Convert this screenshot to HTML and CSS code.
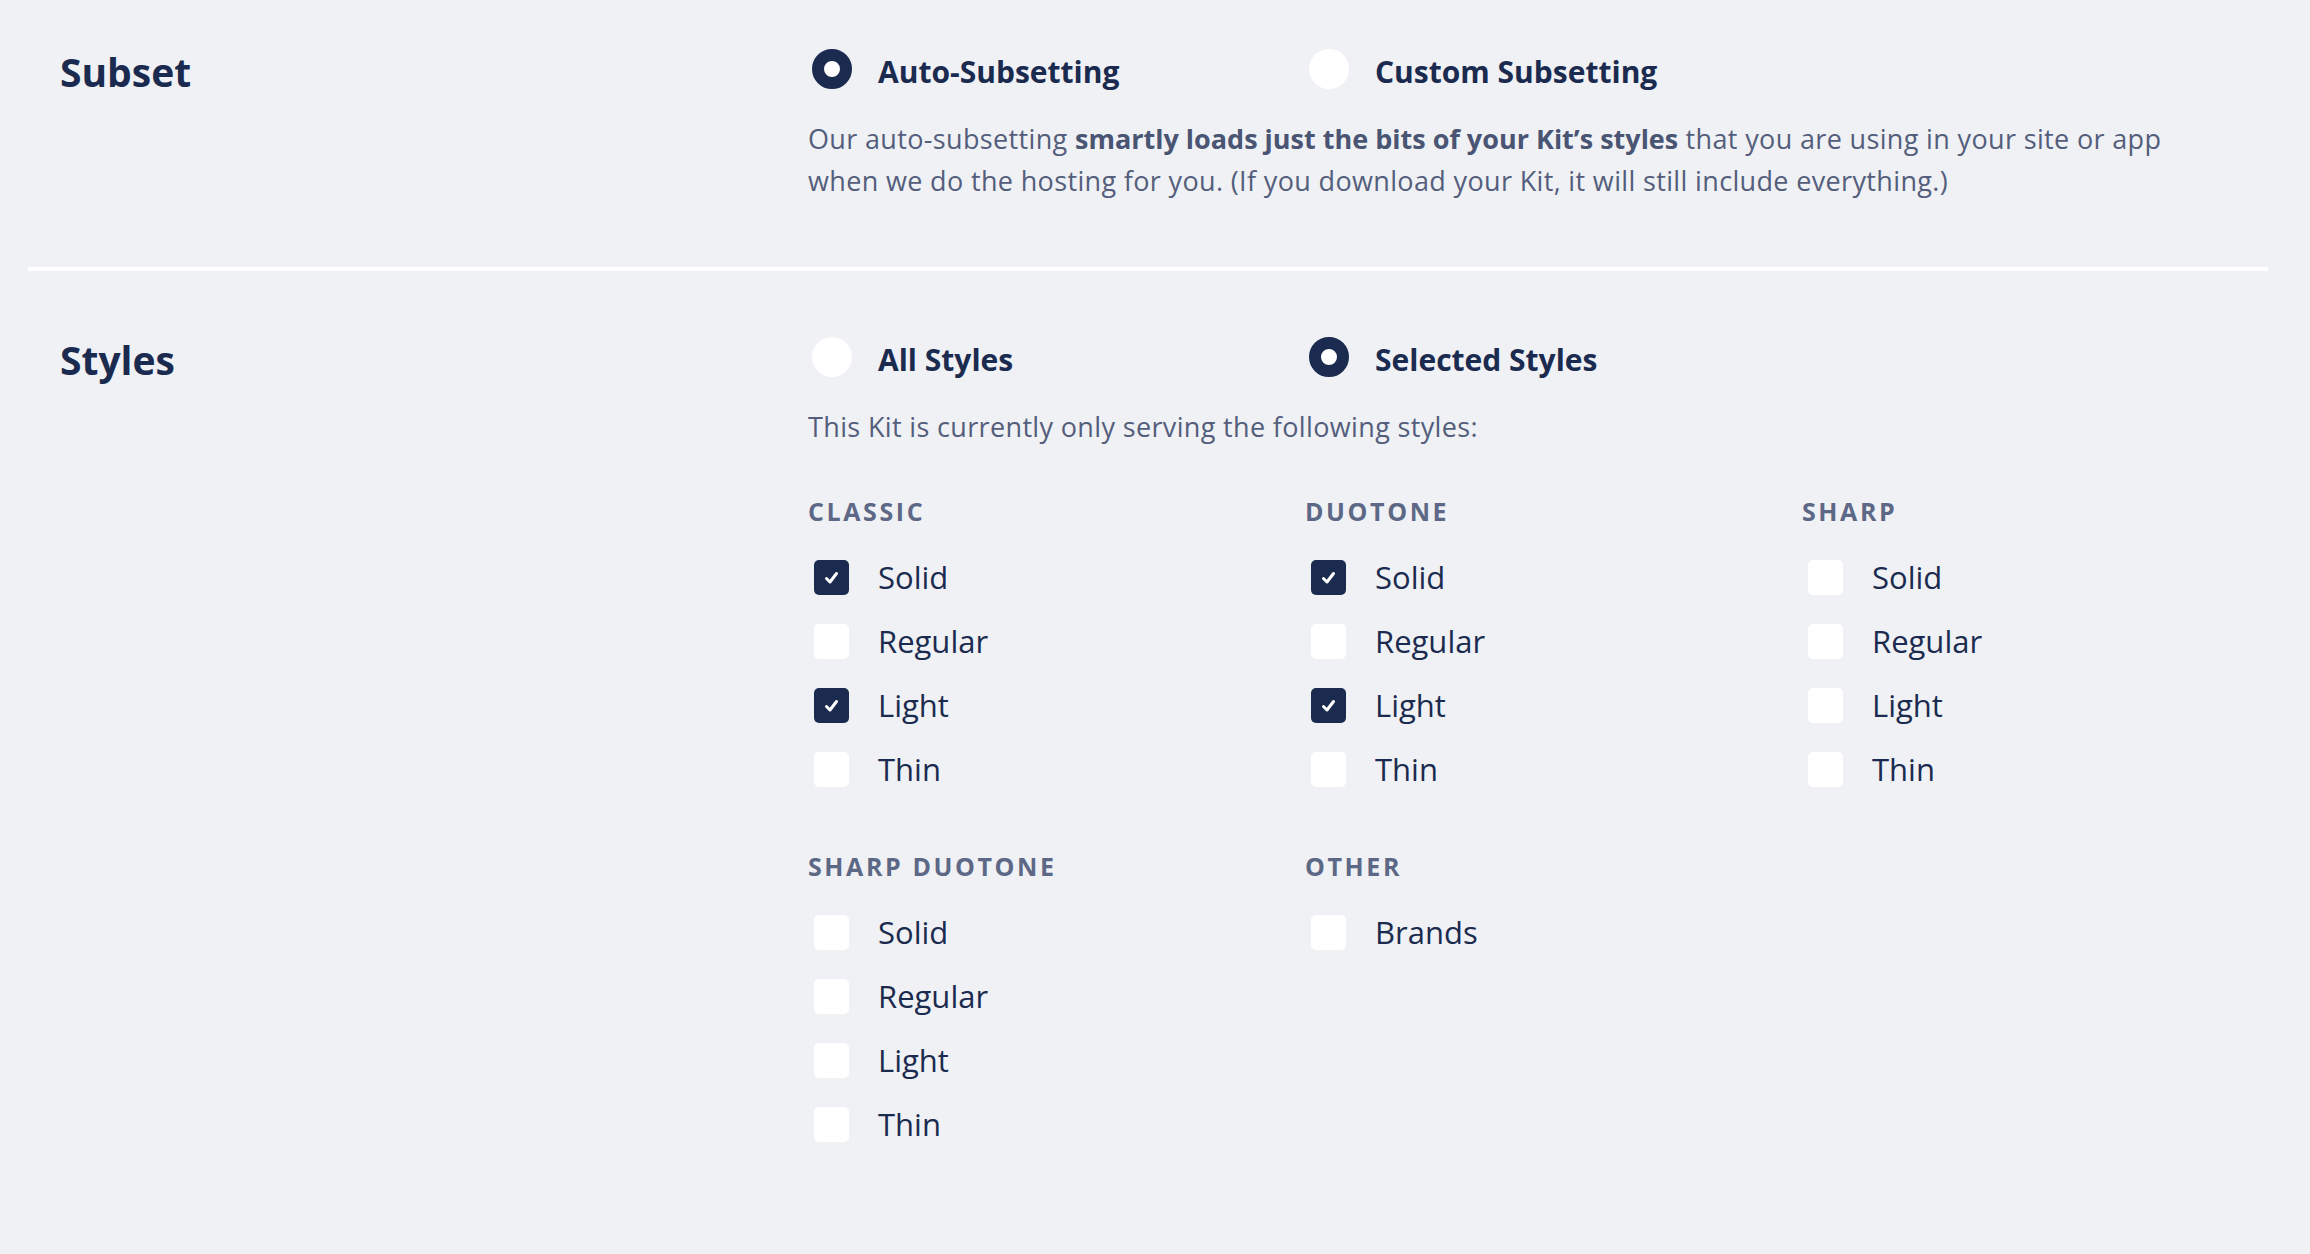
FILE: index.html
```html
<!DOCTYPE html>
<html lang="en">
<head>
<meta charset="utf-8">
<title>Kit Settings</title>
<link rel="stylesheet" href="styles.css">
</head>
<body>
<main class="page">
  <section class="row">
    <h2 class="row-title">Subset</h2>
    <div class="row-body">
      <div class="choices">
        <label class="choice"><span class="radio on"></span><span class="choice-label">Auto-Subsetting</span></label>
        <label class="choice"><span class="radio"></span><span class="choice-label">Custom Subsetting</span></label>
      </div>
      <p class="desc wide">Our auto-subsetting <strong>smartly loads just the bits of your Kit’s styles</strong> that you are using in your site or app when we do the hosting for you. (If you download your Kit, it will still include everything.)</p>
    </div>
  </section>

  <hr class="divider">

  <section class="row">
    <h2 class="row-title">Styles</h2>
    <div class="row-body">
      <div class="choices">
        <label class="choice"><span class="radio"></span><span class="choice-label">All Styles</span></label>
        <label class="choice"><span class="radio on"></span><span class="choice-label">Selected Styles</span></label>
      </div>
      <p class="desc">This Kit is currently only serving the following styles:</p>

      <div class="groups">
        <div class="group">
          <h3 class="group-title">Classic</h3>
          <ul class="checks">
            <li class="check"><span class="box on"><svg viewBox="0 0 35 35"><polyline points="12.5,18.5 16,22 22.5,13.5"/></svg></span><span class="check-label">Solid</span></li>
            <li class="check"><span class="box"></span><span class="check-label">Regular</span></li>
            <li class="check"><span class="box on"><svg viewBox="0 0 35 35"><polyline points="12.5,18.5 16,22 22.5,13.5"/></svg></span><span class="check-label">Light</span></li>
            <li class="check"><span class="box"></span><span class="check-label">Thin</span></li>
          </ul>
        </div>
        <div class="group">
          <h3 class="group-title">Duotone</h3>
          <ul class="checks">
            <li class="check"><span class="box on"><svg viewBox="0 0 35 35"><polyline points="12.5,18.5 16,22 22.5,13.5"/></svg></span><span class="check-label">Solid</span></li>
            <li class="check"><span class="box"></span><span class="check-label">Regular</span></li>
            <li class="check"><span class="box on"><svg viewBox="0 0 35 35"><polyline points="12.5,18.5 16,22 22.5,13.5"/></svg></span><span class="check-label">Light</span></li>
            <li class="check"><span class="box"></span><span class="check-label">Thin</span></li>
          </ul>
        </div>
        <div class="group">
          <h3 class="group-title">Sharp</h3>
          <ul class="checks">
            <li class="check"><span class="box"></span><span class="check-label">Solid</span></li>
            <li class="check"><span class="box"></span><span class="check-label">Regular</span></li>
            <li class="check"><span class="box"></span><span class="check-label">Light</span></li>
            <li class="check"><span class="box"></span><span class="check-label">Thin</span></li>
          </ul>
        </div>
        <div class="group">
          <h3 class="group-title">Sharp Duotone</h3>
          <ul class="checks">
            <li class="check"><span class="box"></span><span class="check-label">Solid</span></li>
            <li class="check"><span class="box"></span><span class="check-label">Regular</span></li>
            <li class="check"><span class="box"></span><span class="check-label">Light</span></li>
            <li class="check"><span class="box"></span><span class="check-label">Thin</span></li>
          </ul>
        </div>
        <div class="group">
          <h3 class="group-title">Other</h3>
          <ul class="checks">
            <li class="check"><span class="box"></span><span class="check-label">Brands</span></li>
          </ul>
        </div>
      </div>
    </div>
  </section>
</main>
</body>
</html>
```

FILE: styles.css
```css
* { box-sizing: border-box; }

html, body {
  margin: 0;
  padding: 0;
  background: #eff1f4;
}

body {
  font-family: "Open Sans", "Lato", sans-serif;
  color: #183153;
}

.page {
  padding: 49px 42px 0 28px;
}

.row {
  display: grid;
  grid-template-columns: 748px 1fr;
  padding: 0 32px;
}

.row-title {
  margin: 3px 0 0;
  font-size: 39px;
  line-height: 40px;
  font-weight: 700;
  color: #1b2b4f;
}

.row-body {
  display: flex;
  flex-direction: column;
}

.choices {
  display: grid;
  grid-template-columns: 497px 497px;
}

.choice {
  display: flex;
  align-items: flex-start;
  gap: 26px;
  height: 40px;
  padding-left: 4px;
}

.radio {
  width: 40px;
  height: 40px;
  border-radius: 50%;
  background: #ffffff;
  flex: none;
}

.radio.on {
  border: 12px solid #1b2b4f;
}

.choice-label {
  padding-top: 6px;
  font-size: 30px;
  line-height: 34px;
  font-weight: 700;
  color: #1b2b4f;
}

.desc {
  margin: 29px 0 0;
  font-size: 27px;
  line-height: 42px;
  letter-spacing: 0.35px;
  color: #545e7c;
}

.desc.wide {
  max-width: 1385px;
}

.desc strong {
  font-weight: 700;
  letter-spacing: 0;
  color: #4a5473;
}

.divider {
  border: 0;
  height: 4px;
  background: #ffffff;
  margin: 65px 0 66px;
}

.groups {
  display: grid;
  grid-template-columns: repeat(3, 497px);
  row-gap: 64px;
  margin-top: 48px;
}

.group-title {
  margin: 0 0 34px;
  font-size: 25px;
  line-height: 30px;
  font-weight: 700;
  text-transform: uppercase;
  letter-spacing: 2.6px;
  color: #5d6886;
}

.checks {
  list-style: none;
  margin: 0;
  padding: 0;
  display: flex;
  flex-direction: column;
  gap: 29px;
}

.check {
  display: flex;
  align-items: center;
  gap: 29px;
  height: 35px;
  padding-left: 6px;
}

.box {
  width: 35px;
  height: 35px;
  border-radius: 5px;
  background: #ffffff;
  flex: none;
  display: flex;
}

.box.on {
  background: #1b2b4f;
}

.box svg {
  width: 35px;
  height: 35px;
}

.box svg polyline {
  fill: none;
  stroke: #ffffff;
  stroke-width: 3;
  stroke-linecap: round;
  stroke-linejoin: round;
}

.check-label {
  font-size: 31px;
  line-height: 35px;
  color: #1b2b4f;
}
```
